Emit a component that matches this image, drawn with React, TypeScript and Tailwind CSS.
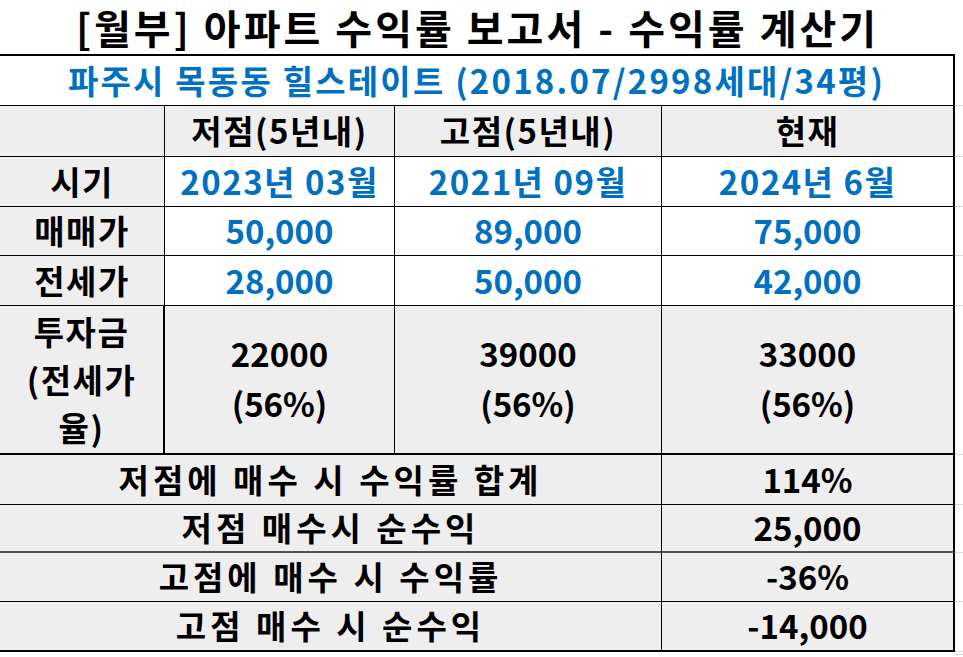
import React from "react";

const FONT = { fontFamily: '"Malgun Gothic", "Noto Sans CJK KR", "Noto Sans", sans-serif' };

function Filler({ line = true }: { line?: boolean }) {
  return <div className={`flex-1 ${line ? "border-b border-[#d9d9d9]" : ""}`} />;
}

export default function App() {
  const cols = ["w-[165px]", "w-[230px]", "w-[267px]", "w-[293px]"];
  const cell = "flex items-center justify-center border-r border-b border-black";
  const blue = "text-[#0070c0]";
  const ko = "tracking-[1.5px]";

  return (
    <div className="w-[963px] h-[657px] bg-white overflow-hidden font-bold text-black" style={FONT}>
      {/* title */}
      <div className="flex h-[56px]">
        <div className="w-[955px] flex items-center justify-center border-b-2 border-black text-[40px] tracking-[3px] leading-[52px]">
          [월부] 아파트 수익률 보고서 - 수익률 계산기
        </div>
        <Filler line={false} />
      </div>

      {/* subtitle */}
      <div className="flex h-[50px]">
        <div className={`w-[955px] ${cell} border-r-2 text-[33px] tracking-[2.2px] ${blue}`}>
          파주시 목동동 힐스테이트 (2018.07/2998세대/34평)
        </div>
        <Filler />
      </div>

      {/* header */}
      <div className={`flex h-[51px] text-[33px] ${ko}`}>
        <div className={`${cols[0]} ${cell} bg-[#eeeeee]`} />
        <div className={`${cols[1]} ${cell} bg-[#eeeeee]`}>저점(5년내)</div>
        <div className={`${cols[2]} ${cell} bg-[#eeeeee]`}>고점(5년내)</div>
        <div className={`${cols[3]} ${cell} border-r-2 bg-[#eeeeee]`}>현재</div>
        <Filler />
      </div>

      {/* rows */}
      {[
        ["시기", "2023년 03월", "2021년 09월", "2024년 6월", "h-[50px]", ko],
        ["매매가", "50,000", "89,000", "75,000", "h-[49px]", ""],
        ["전세가", "28,000", "50,000", "42,000", "h-[50px]", ""],
      ].map(([a, b, c, d, h, t]) => (
        <div key={a} className={`flex ${h} text-[33px]`}>
          <div className={`${cols[0]} ${cell} ${ko} bg-[#eeeeee]`}>{a}</div>
          <div className={`${cols[1]} ${cell} ${t} ${blue}`}>{b}</div>
          <div className={`${cols[2]} ${cell} ${t} ${blue}`}>{c}</div>
          <div className={`${cols[3]} ${cell} ${t} border-r-2 ${blue}`}>{d}</div>
          <Filler />
        </div>
      ))}

      {/* 투자금 */}
      <div className="flex h-[149px] text-[33px]">
        <div className={`${cols[0]} ${cell} ${ko} border-b-2 border-r-2 bg-[#eeeeee] flex-col leading-[48px] pb-[2px]`}>
          <span>투자금</span>
          <span>(전세가</span>
          <span>율)</span>
        </div>
        {[
          ["22000", "(56%)"],
          ["39000", "(56%)"],
          ["33000", "(56%)"],
        ].map(([v, p], i) => (
          <div
            key={i}
            className={`${cols[i + 1]} ${cell} border-b-2 ${i === 2 ? "border-r-2" : ""} bg-[#eeeeee] flex-col leading-[50px] pb-[4px]`}
          >
            <span>{v}</span>
            <span>{p}</span>
          </div>
        ))}
        <Filler />
      </div>

      {/* summary */}
      {[
        ["저점에 매수 시 수익률 합계", "114%", "h-[50px]", ""],
        ["저점 매수시 순수익", "25,000", "h-[48px]", "border-b-2 border-b-[#555555]"],
        ["고점에 매수 시 수익률", "-36%", "h-[49px]", ""],
        ["고점 매수 시 순수익", "-14,000", "h-[50px]", "border-b-2"],
      ].map(([a, b, h, extra]) => (
        <div key={a} className={`flex ${h} text-[33px]`}>
          <div className={`w-[662px] ${cell} ${extra} bg-[#eeeeee] tracking-[4px]`}>{a}</div>
          <div className={`${cols[3]} ${cell} ${extra} border-r-2 bg-[#eeeeee]`}>{b}</div>
          <Filler />
        </div>
      ))}
      <div className="flex h-[3px]">
        <div className="w-[955px]" />
        <Filler />
      </div>
    </div>
  );
}
